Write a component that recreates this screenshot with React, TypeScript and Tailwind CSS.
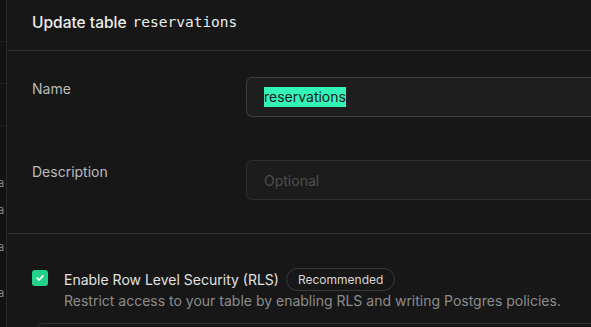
import React from 'react';

const sans = { fontFamily: 'Inter, "Noto Sans", sans-serif' };

function Label({ children }: { children: React.ReactNode }) {
  return <div className="w-[214px] shrink-0 pt-[1px] text-[14px] text-[#bbbbbb]">{children}</div>;
}

export default function App() {
  return (
    <div className="flex h-[327px] w-[591px] overflow-hidden bg-[#171717]" style={sans}>
      {/* backdrop sliver of the page behind the panel */}
      <div className="flex w-[6px] shrink-0 flex-col overflow-hidden bg-[#121212] text-[11px] leading-[14px] text-[#8a8a8a]">
        <div className="h-[42px] shrink-0 border-b border-[#1e1e1e]" />
        <div className="h-[42px] shrink-0 border-b border-[#1e1e1e]" />
        <div className="h-[42px] shrink-0 border-b border-[#1e1e1e]" />
        <div className="-ml-[2px] mt-[50px]">a</div>
        <div className="-ml-[2px] mt-[13px]">a</div>
        <div className="-ml-[2px] mt-[23px]">a</div>
        <div className="-ml-[2px] mt-[32px]">a</div>
      </div>

      <div className="flex min-w-0 flex-1 flex-col border-l border-[#2a2a2a]">
        {/* header */}
        <div className="flex h-[51px] shrink-0 items-center border-b border-[#2e2e2e] pl-[25px] pb-[4px]">
          <span className="text-[15.5px] font-medium text-[#ededed]">Update table</span>
          <span
            className="ml-[6px] text-[14.5px] text-[#ededed]"
            style={{ fontFamily: '"DejaVu Sans Mono", "Liberation Mono", monospace' }}
          >
            reservations
          </span>
        </div>

        {/* name + description */}
        <div className="flex shrink-0 flex-col gap-[43px] border-b border-[#2e2e2e] pl-[25px] pt-[26px] pb-[33px]">
          <div className="flex">
            <Label>Name</Label>
            <div className="flex h-[40px] flex-1 items-center rounded-l-[6px] border border-r-0 border-[#3e3e3e] bg-[#1e1e1e] pl-[17px]">
              <span className="bg-[#34f5b8] text-[14px] leading-[20px] text-[#1c1c1c]">reservations</span>
            </div>
          </div>
          <div className="flex">
            <Label>Description</Label>
            <div className="flex h-[40px] flex-1 items-center rounded-l-[6px] border border-r-0 border-[#2f2f2f] bg-[#1c1c1c] pl-[17px]">
              <span className="text-[14px] text-[#4f4f4f]">Optional</span>
            </div>
          </div>
        </div>

        {/* RLS */}
        <div className="flex shrink-0 gap-[16px] pl-[25px] pt-[34px]">
          <div className="mt-[2px] flex h-[16px] w-[16px] items-center justify-center rounded-[3px] bg-[#22d38b]">
            <svg width="10" height="10" viewBox="0 0 24 24" fill="none" stroke="white" strokeWidth="4" strokeLinecap="round" strokeLinejoin="round">
              <path d="M5 12.5l4.5 4.5L19 7" />
            </svg>
          </div>
          <div className="flex flex-col">
            <div className="flex items-center gap-[7px]">
              <span className="text-[14px] text-[#e2e2e2]">Enable Row Level Security (RLS)</span>
              <span className="rounded-full border border-[#3a3a3a] px-[11px] py-[2px] text-[12px] leading-[17px] text-[#d6d6d6]">
                Recommended
              </span>
            </div>
            <div className="-mt-[1px] whitespace-nowrap text-[14px] text-[#8c8c8c]">
              Restrict access to your table by enabling RLS and writing Postgres policies.
            </div>
          </div>
        </div>

        {/* top edge of the next card */}
        <div className="ml-[30px] mt-[12px] h-[10px] shrink-0 rounded-tl-[6px] border-l border-t border-[#2f2f2f]" />
      </div>
    </div>
  );
}
